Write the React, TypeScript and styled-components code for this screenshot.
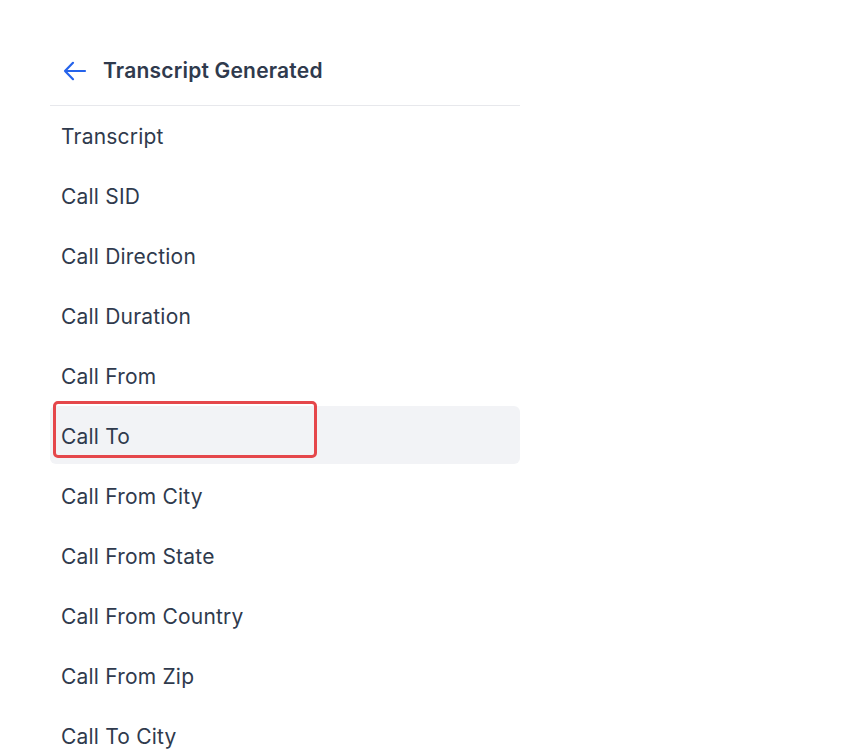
import { ReactElement } from 'react'
import styled, { createGlobalStyle } from 'styled-components'

const GlobalStyle = createGlobalStyle`
    body {
        margin: 0;
        background: #ffffff;
        font-family: Inter, 'Noto Sans', sans-serif;
        -webkit-font-smoothing: antialiased;
    }
`

const Panel = styled.div`
    width: 470px;
    margin-left: 50px;
    padding-top: 36px;
`

const Header = styled.div`
    height: 70px;
    display: flex;
    align-items: center;
    gap: 16px;
    padding-left: 13px;
    box-sizing: border-box;
    border-bottom: 1px solid #e7e8ec;

    svg {
        flex-shrink: 0;
    }
`

const Title = styled.h2`
    margin: 0;
    font-size: 21px;
    font-weight: 600;
    color: #2f3a4d;
    letter-spacing: 0.2px;
`

const List = styled.ul`
    list-style: none;
    margin: 0;
    padding: 0;
    display: flex;
    flex-direction: column;
    gap: 2px;
`

const Row = styled.li<{ $active?: boolean }>`
    position: relative;
    height: 58px;
    display: flex;
    align-items: center;
    padding: 3px 0 0 11px;
    box-sizing: border-box;
    border-radius: 6px;
    font-size: 21px;
    letter-spacing: 0.2px;
    color: #2f3a4d;
    background: ${(p) => (p.$active ? '#f2f3f6' : 'transparent')};
`

const Annotation = styled.span`
    position: absolute;
    left: 3px;
    top: -5px;
    width: 264px;
    height: 57px;
    box-sizing: border-box;
    border: 3px solid #e5474b;
    border-radius: 5px;
    pointer-events: none;
`

const items = [
    'Transcript',
    'Call SID',
    'Call Direction',
    'Call Duration',
    'Call From',
    'Call To',
    'Call From City',
    'Call From State',
    'Call From Country',
    'Call From Zip',
    'Call To City',
]

function BackArrow(): ReactElement {
    return (
        <svg width='24' height='20' viewBox='0 0 24 20' fill='none'>
            <path
                d='M10 1.8 2 10l8 8.2M2 10h20'
                stroke='#2563eb'
                strokeWidth='2.2'
                strokeLinecap='round'
                strokeLinejoin='round'
            />
        </svg>
    )
}

function App(): ReactElement {
    return (
        <>
            <GlobalStyle />
            <Panel>
                <Header>
                    <BackArrow />
                    <Title>Transcript Generated</Title>
                </Header>
                <List>
                    {items.map((item) => (
                        <Row key={item} $active={item === 'Call To'}>
                            {item === 'Call To' && <Annotation />}
                            {item}
                        </Row>
                    ))}
                </List>
            </Panel>
        </>
    )
}

export default App
